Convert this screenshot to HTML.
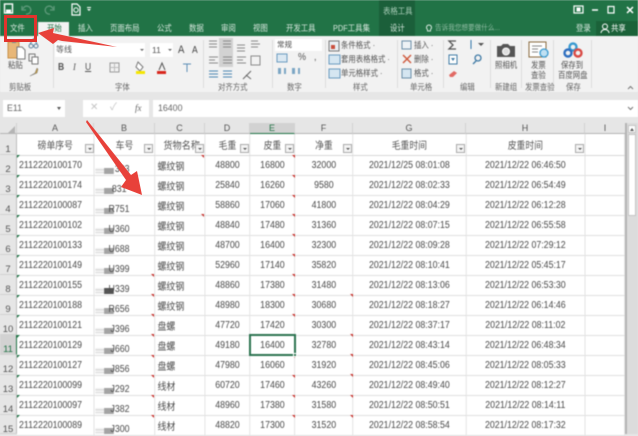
<!DOCTYPE html>
<html><head><meta charset="utf-8"><style>
*{box-sizing:border-box}
html,body{margin:0;padding:0}
body{width:638px;height:434px;overflow:hidden;position:relative;background:#e6e6e6;font-family:"Liberation Sans","Noto Sans CJK SC",sans-serif;color:#444}
.a{position:absolute;white-space:nowrap}
#top{left:0;top:0;width:638px;height:36px;background:#217346}
.tab{position:absolute;top:21px;font-size:8.5px;color:#d5e6dc;line-height:14px;white-space:nowrap;transform:scaleX(.87);transform-origin:0 50%}
#rib{left:0;top:36px;width:638px;height:56px;background:#f2f2f2}
.sep{position:absolute;top:40px;width:1px;height:48px;background:#dcdcdc}
.gl{position:absolute;top:82px;font-size:8.5px;color:#666;line-height:11px;white-space:nowrap;transform:scaleX(.87);transform-origin:0 50%}
.rt{position:absolute;font-size:8.5px;color:#555;line-height:12px;white-space:nowrap;transform:scaleX(.87);transform-origin:0 50%}
table{position:absolute;left:17px;top:134px;border-collapse:collapse;table-layout:fixed;width:691px;background:#fff;font-size:10px;color:#4a4a4a;transform:scaleX(.88);transform-origin:0 0}
td{border-right:1px solid #e0e0e0;border-bottom:1px solid #e0e0e0;height:20px;padding:0;overflow:hidden;white-space:nowrap;text-align:center;position:relative}
tr.h td{height:21px;font-size:10px;color:#555;border-bottom:1px solid #d8d8d8}
td.l{text-align:left;padding-left:2.300px}
td.k{text-align:left;padding-left:2.300px;font-size:10.2px}
td.b{text-align:right;padding-right:28.400px}
td.b span{position:relative;top:4px}
.bar{position:absolute;left:1px;top:12px;width:20.500px;height:6px;background:linear-gradient(#f4f4f4 0 20%,#ddd 20% 40%,#f4f4f4 40% 70%,#ddd 70% 85%,#f4f4f4 85%)}
.bar:after{content:"";position:absolute;right:0;top:0;width:10.200px;height:6px;background:#a4a4a4}
.bar.d:after{background:#555}
.hc{position:absolute;top:123px;height:11px;background:#e6e6e6;border-right:1px solid #d2d2d2;border-bottom:1px solid #b5b5b5;font-size:9px;line-height:11px;color:#555;text-align:center}
.rh{position:absolute;left:0;width:17px;height:20px;background:#e6e6e6;border-right:1px solid #bdbdbd;border-bottom:1px solid #d2d2d2;font-size:9.5px;line-height:29px;color:#555;text-align:center;overflow:hidden}
.f{position:absolute;top:144px;width:9px;height:9px;background:#f4f4f4;border:1px solid #aaa}
.f:after{content:"";position:absolute;left:1.500px;top:2.500px;border:2px solid transparent;border-top:2.500px solid #555}
.r{position:absolute;width:0;height:0;border-top:3px solid #c8342f;border-left:3px solid transparent}
.g{position:absolute;width:0;height:0;border-top:3px solid #217346;border-right:3px solid transparent}
#sheet{position:absolute;left:0;top:0;width:638px;height:434px;filter:blur(.5px)}
</style></head><body>
<div id="sheet">
<div class="a" id="top"></div>
<svg class="a" style="left:0;top:0" width="120" height="20"><rect x="4.500" y="4" width="8" height="9" fill="none" stroke="#fff" stroke-width="1.4"/><rect x="6" y="9.500" width="5" height="3" fill="#fff"/><path d="M23 9a4 4 0 1 1 3 5M22 6v4h4" fill="none" stroke="#5f9a7b" stroke-width="1.3"/><path d="M53 9a4 4 0 1 0-3 5M54 6v4h-4" fill="none" stroke="#5f9a7b" stroke-width="1.3"/><path d="M72 4h5l3 3v8h-8z" fill="none" stroke="#fff" stroke-width="1.2"/><circle cx="76" cy="10" r="2.2" fill="none" stroke="#fff"/><path d="M87 9h4l-2 2z" fill="#fff"/><rect x="87" y="7" width="4" height="1" fill="#fff"/></svg>
<div class="tab" style="left:10px">文件</div>
<div class="a" style="left:38px;top:22px;width:31px;height:14px;background:#f2f2f2"></div>
<div class="tab" style="left:47px;color:#217346">开始</div>
<div class="tab" style="left:78px">插入</div>
<div class="tab" style="left:110px">页面布局</div>
<div class="tab" style="left:157px">公式</div>
<div class="tab" style="left:189px">数据</div>
<div class="tab" style="left:221px">审阅</div>
<div class="tab" style="left:253px">视图</div>
<div class="tab" style="left:286px">开发工具</div>
<div class="tab" style="left:333px">PDF工具集</div>
<div class="a" style="left:379px;top:0;width:36px;height:36px;background:#1b5f3a"></div>
<div class="tab" style="left:383px;top:4px;color:#a9cdb8">表格工具</div>
<div class="tab" style="left:390px">设计</div>
<div class="tab" style="left:435px;font-size:7.600px;color:#8fbba2">告诉我您想要做什么...</div>
<svg class="a" style="left:425px;top:24px" width="8" height="10"><path d="M4 1a2.500 2.500 0 0 1 1.500 4.500V7h-3V5.500A2.500 2.500 0 0 1 4 1z" fill="none" stroke="#cfe3d8"/></svg>
<div class="tab" style="left:576px">登录</div>
<div class="a" style="left:596px;top:21px;width:42px;height:15px;background:#1b6239"></div>
<div class="tab" style="left:611px;color:#fff">共享</div>
<svg class="a" style="left:600px;top:23px" width="10" height="11"><circle cx="5" cy="3.500" r="2.500" fill="none" stroke="#fff"/><path d="M1 10a4 3.500 0 0 1 8 0" fill="none" stroke="#fff"/></svg>
<svg class="a" style="left:570px;top:3px" width="68" height="14" fill="none" stroke="#fff"><rect x="4" y="3" width="9" height="7" stroke-width="1.2"/><rect x="7" y="5" width="3" height="3" fill="#fff"/><path d="M22 7h6" stroke-width="1.5"/><rect x="38" y="3.500" width="6" height="6.500" stroke-width="1.2"/><path d="M57 4l6 6m0-6l-6 6" stroke-width="1.5"/></svg>

<div class="a" id="rib"></div>
<div class="sep" style="left:53px"></div><div class="sep" style="left:203px"></div><div class="sep" style="left:272px"></div><div class="sep" style="left:325px"></div><div class="sep" style="left:397px"></div><div class="sep" style="left:443px"></div><div class="sep" style="left:490px"></div><div class="sep" style="left:521px"></div><div class="sep" style="left:553px"></div><div class="sep" style="left:591px"></div>
<svg class="a" style="left:0;top:36px" width="54" height="46"><rect x="8" y="6" width="11" height="16" fill="#e8b778" stroke="#c98f45"/><rect x="12" y="4" width="4" height="3" fill="#888"/><path d="M17 11h5l3 3v9h-8z" fill="#fff" stroke="#777"/><circle cx="31" cy="10" r="2" fill="none" stroke="#5b7f9c"/><circle cx="36" cy="10" r="2" fill="none" stroke="#5b7f9c"/><path d="M30 8l4-6M37 8l-3-6" stroke="#5b7f9c"/><rect x="29" y="18" width="6" height="7" fill="none" stroke="#777"/><rect x="32" y="21" width="6" height="7" fill="#fff" stroke="#777"/><path d="M30 40l5-3 2-5 1 1-1 4z" fill="#c49a3c" stroke="#777" stroke-width=".5"/></svg>
<div class="rt" style="left:8px;top:59px">粘贴</div>
<div class="gl" style="left:9px">剪贴板</div>
<div class="a" style="left:55px;top:43px;width:90px;height:14px;background:#fff;font-size:8px;line-height:14px;padding-left:1px;color:#555">等线</div>
<div class="a" style="left:150px;top:43px;width:23px;height:14px;background:#fff;font-size:8.5px;line-height:14px;padding-left:2px;color:#555">11</div>
<div class="a" style="left:140px;top:49px;border:2px solid transparent;border-top:2px solid #666"></div>
<div class="a" style="left:168px;top:49px;border:2px solid transparent;border-top:2px solid #666"></div>
<div class="rt" style="left:178px;top:44px;font-size:11px;color:#444">A</div><div class="rt" style="left:192px;top:45px;font-size:9.800px;color:#444">A</div>
<div class="rt" style="left:58px;top:62px;font-weight:bold;font-size:9.800px">B</div>
<div class="rt" style="left:73px;top:62px;font-style:italic;font-size:9.800px;font-family:'Liberation Serif',serif">I</div>
<div class="rt" style="left:85px;top:62px;text-decoration:underline;font-size:9.800px">U</div>
<svg class="a" style="left:105px;top:60px" width="100" height="16"><rect x="5" y="3" width="9" height="9" fill="none" stroke="#999"/><path d="M9.500 3v9M5 7.500h9" stroke="#bbb"/><path d="M33 2l5 5-3 4-4-4z" fill="#fff" stroke="#777"/><rect x="31" y="11" width="9" height="3" fill="#f5e600"/><path d="M54 10l3-7 3 7" fill="none" stroke="#555"/><rect x="52" y="11" width="9" height="3" fill="#d8261c"/><path d="M78 4h8M82 4v8" stroke="#5b8db5"/></svg>
<div class="gl" style="left:115px">字体</div>
<div class="a" style="left:219px;top:38px;width:14px;height:29px;background:#d2d2d2"></div>
<svg class="a" style="left:205px;top:38px" width="66" height="42" stroke="#8a8a8a"><path d="M4 3h8M4 6h8M4 9h8M18 3h8M18 6h8M18 9h8M32 7h8M32 10h8M32 13h8M46 3h7M46 6h9M46 9h7"/><path d="M4 19h9M4 22h6M4 25h9M18 19h9M18 22h9M18 25h9M32 19h9M32 22h6M32 25h9M46 18h9v9h-9z" fill="none"/><path d="M4 33h9M4 36h9M4 39h9M18 33h9M18 36h9M18 39h9" stroke="#4d87b3"/><path d="M38 41l8-8M41 37l5 4" stroke="#666"/></svg>
<div class="gl" style="left:218px">对齐方式</div>
<div class="a" style="left:275px;top:39px;width:47px;height:12px;background:#fff;font-size:7.500px;line-height:12px;padding-left:2px">常规</div>
<div class="rt" style="left:298px;top:52px;font-size:10.400px">%</div><div class="rt" style="left:314px;top:52px;font-size:10.400px">,</div>
<svg class="a" style="left:276px;top:53px" width="30" height="26"><rect x="1" y="1" width="10" height="8" fill="#dbe8f2" stroke="#6a9bc0"/><path d="M2 15h3v6H2zM8 15h2v6H8zM16 15h3v6h-3zM22 15h2v6h-2z" fill="#7ca6c4"/></svg>
<div class="gl" style="left:287px">数字</div>
<svg class="a" style="left:328px;top:39px" width="14" height="42"><rect x="1" y="2" width="10" height="10" fill="#eaeff3" stroke="#777"/><rect x="3" y="6" width="4" height="4" fill="#c94f3d"/><rect x="1" y="16" width="11" height="9" fill="#d5e6f1" stroke="#6a9bc0"/><rect x="1" y="30" width="11" height="9" fill="#d5e6f1" stroke="#6a9bc0"/></svg>
<div class="rt" style="left:341px;top:39px">条件格式 ·</div>
<div class="rt" style="left:341px;top:53px">套用表格格式 ·</div>
<div class="rt" style="left:341px;top:67px">单元格样式 ·</div>
<div class="gl" style="left:353px">样式</div>
<svg class="a" style="left:401px;top:39px" width="12" height="42"><rect x="1" y="2" width="9" height="8" fill="#eef2f5" stroke="#6a8ea8"/><path d="M2 16l8 8M10 16l-8 8" stroke="#d05b3f" stroke-width="1.500"/><rect x="1" y="30" width="9" height="9" fill="#d5e6f1" stroke="#6a8ea8"/></svg>
<div class="rt" style="left:414px;top:39px">插入 ·</div>
<div class="rt" style="left:414px;top:53px">删除 ·</div>
<div class="rt" style="left:414px;top:67px">格式 ·</div>
<div class="gl" style="left:410px">单元格</div>
<svg class="a" style="left:447px;top:38px" width="44" height="42"><path d="M9 3H2l4 4-4 4h7" fill="none" stroke="#555" stroke-width="1.300"/><rect x="2" y="17" width="8" height="9" fill="#fff" stroke="#3f7aa5"/><path d="M4 20h4l-2 3z" fill="#3f7aa5"/><path d="M2 37l5-4 3 2-4 4H3z" fill="#e16a64"/><path d="M24 2v9" stroke="#2f75a8"/><path d="M31 5h6l-3 3z" fill="#555"/><circle cx="31" cy="20" r="3" fill="none" stroke="#3f7aa5" stroke-width="1.300"/><path d="M29 23l-3 3" stroke="#3f7aa5" stroke-width="1.300"/></svg>
<div class="gl" style="left:460px">编辑</div>
<svg class="a" style="left:496px;top:43px" width="20" height="15"><path d="M1 3h4l2-2h5l2 2h5v11H1z" fill="#555"/><circle cx="10" cy="8.500" r="3.500" fill="#ddd" stroke="#fff"/></svg>
<div class="rt" style="left:495px;top:59px">照相机</div>
<div class="gl" style="left:495px">新建组</div>
<svg class="a" style="left:527px;top:41px" width="26" height="20"><rect x="2" y="1" width="17" height="15" fill="#fff" stroke="#8a6a3d"/><path d="M5 5h10M5 8h6M5 11h6" stroke="#888"/><circle cx="17" cy="12" r="4" fill="#bfe0f2" stroke="#3a9ad0" stroke-width="1.300"/></svg>
<div class="rt" style="left:531px;top:59px">发票</div><div class="rt" style="left:531px;top:69px">查验</div>
<div class="gl" style="left:525px">发票查验</div>
<svg class="a" style="left:562px;top:42px" width="22" height="16" fill="none" stroke-width="2.400"><circle cx="11" cy="5" r="3.500" stroke="#3a9ad0"/><circle cx="6" cy="11" r="3.500" stroke="#2f6fc0"/><circle cx="16" cy="11" r="3.500" stroke="#d94a45"/></svg>
<div class="rt" style="left:561px;top:59px">保存到</div><div class="rt" style="left:558px;top:69px">百度网盘</div>
<div class="gl" style="left:566px">保存</div>
<svg class="a" style="left:627px;top:85px" width="7" height="5"><path d="M1 4l2.500-2.500L6 4" fill="none" stroke="#777"/></svg>

<div class="a" style="left:3px;top:100px;width:62px;height:17px;background:#fff;font-size:8.800px;line-height:17px;padding-left:4px;color:#666">E11</div>
<div class="a" style="left:57px;top:107px;border:2px solid transparent;border-top:3px solid #555"></div>
<div class="a" style="left:83px;top:100px;width:66px;height:17px;background:#fff"></div>
<div class="a" style="left:90px;top:101px;font-size:10px;line-height:14px;color:#c4c4c4">✕</div>
<div class="a" style="left:110px;top:101px;font-size:10px;line-height:14px;color:#c4c4c4">✓</div>
<div class="a" style="left:135px;top:101px;font-size:9px;line-height:14px;font-style:italic;color:#666;font-family:'Liberation Serif',serif">fx</div>
<div class="a" style="left:153px;top:100px;width:485px;height:17px;background:#fff;font-size:8.800px;line-height:17px;padding-left:5px;color:#666">16400</div>
<svg class="a" style="left:627px;top:106px" width="7" height="5"><path d="M1 1l2.500 2.500L6 1" fill="none" stroke="#777"/></svg>

<table>
<colgroup><col style="width:87.500px"><col style="width:69.300px"><col style="width:56.800px"><col style="width:51.100px"><col style="width:51.100px"><col style="width:65.900px"><col style="width:128.400px"><col style="width:135.200px"><col style="width:45.700px"></colgroup>
<tr class="h"><td>磅单序号</td><td>车号</td><td style="text-align:left;padding-left:9px;font-size:10.400px">货物名称</td><td>毛重</td><td>皮重</td><td>净重</td><td>毛重时间</td><td>皮重时间</td><td></td></tr>
<tr><td class="l">2112220100170</td><td class="b"><i class="bar"></i><span>303</span></td><td class="k">螺纹钢</td><td>48800</td><td>16800</td><td>32000</td><td>2021/12/25 08:01:08</td><td>2021/12/22 06:46:50</td><td></td></tr>
<tr><td class="l">2112220100174</td><td class="b" style="padding-right:31.800px"><i class="bar"></i><span>831</span></td><td class="k">螺纹钢</td><td>25840</td><td>16260</td><td>9580</td><td>2021/12/22 08:02:33</td><td>2021/12/22 06:54:49</td><td></td></tr>
<tr><td class="l">2112220100087</td><td class="b"><i class="bar"></i><span>R751</span></td><td class="k">螺纹钢</td><td>58860</td><td>17060</td><td>41800</td><td>2021/12/22 08:04:29</td><td>2021/12/22 06:12:28</td><td></td></tr>
<tr><td class="l">2112220100102</td><td class="b"><i class="bar"></i><span>U360</span></td><td class="k">螺纹钢</td><td>48840</td><td>17480</td><td>31360</td><td>2021/12/22 08:07:15</td><td>2021/12/22 06:55:58</td><td></td></tr>
<tr><td class="l">2112220100133</td><td class="b"><i class="bar"></i><span>U688</span></td><td class="k">螺纹钢</td><td>48700</td><td>16400</td><td>32300</td><td>2021/12/22 08:09:28</td><td>2021/12/22 07:29:12</td><td></td></tr>
<tr><td class="l">2112220100149</td><td class="b"><i class="bar"></i><span>U399</span></td><td class="k">螺纹钢</td><td>52960</td><td>17140</td><td>35820</td><td>2021/12/22 08:10:41</td><td>2021/12/22 05:45:17</td><td></td></tr>
<tr><td class="l">2112220100155</td><td class="b"><i class="bar d"></i><span>U339</span></td><td class="k">螺纹钢</td><td>48860</td><td>17380</td><td>31480</td><td>2021/12/22 08:13:06</td><td>2021/12/22 06:53:30</td><td></td></tr>
<tr><td class="l">2112220100188</td><td class="b"><i class="bar"></i><span>R656</span></td><td class="k">螺纹钢</td><td>48980</td><td>18300</td><td>30680</td><td>2021/12/22 08:18:27</td><td>2021/12/22 06:14:46</td><td></td></tr>
<tr><td class="l">2112220100121</td><td class="b"><i class="bar"></i><span>J396</span></td><td class="k">盘螺</td><td>47720</td><td>17420</td><td>30300</td><td>2021/12/22 08:37:17</td><td>2021/12/22 08:11:02</td><td></td></tr>
<tr><td class="l">2112220100129</td><td class="b"><i class="bar"></i><span>J660</span></td><td class="k">盘螺</td><td>49180</td><td>16400</td><td>32780</td><td>2021/12/22 08:43:14</td><td>2021/12/22 06:48:34</td><td></td></tr>
<tr><td class="l">2112220100127</td><td class="b"><i class="bar"></i><span>J856</span></td><td class="k">盘螺</td><td>47980</td><td>16060</td><td>31920</td><td>2021/12/22 08:45:06</td><td>2021/12/22 08:05:33</td><td></td></tr>
<tr><td class="l">2112220100099</td><td class="b"><i class="bar"></i><span>J292</span></td><td class="k">线材</td><td>60720</td><td>17460</td><td>43260</td><td>2021/12/22 08:49:40</td><td>2021/12/22 08:12:27</td><td></td></tr>
<tr><td class="l">2112220100097</td><td class="b"><i class="bar"></i><span>J382</span></td><td class="k">线材</td><td>48960</td><td>17380</td><td>31580</td><td>2021/12/22 08:50:51</td><td>2021/12/22 08:14:11</td><td></td></tr>
<tr><td class="l">2112220100089</td><td class="b"><i class="bar"></i><span>J300</span></td><td class="k">线材</td><td>48820</td><td>17300</td><td>31520</td><td>2021/12/22 08:58:54</td><td>2021/12/22 08:17:32</td><td></td></tr>
</table>

<div class="hc" style="left:0;width:17px"></div>
<div class="a" style="left:8px;top:126px;width:0;height:0;border-bottom:7px solid #b5b5b5;border-left:7px solid transparent"></div>
<div class="hc" style="left:17px;width:77px">A</div>
<div class="hc" style="left:94px;width:61px">B</div>
<div class="hc" style="left:155px;width:50px">C</div>
<div class="hc" style="left:205px;width:45px">D</div>
<div class="hc" style="left:250px;width:45px;background:#d2d2d2;border-bottom:1px solid #217346;color:#217346">E</div>
<div class="hc" style="left:295px;width:58px">F</div>
<div class="hc" style="left:353px;width:113px">G</div>
<div class="hc" style="left:466px;width:119px">H</div>
<div class="hc" style="left:585px;width:41px">I</div>

<div class="rh" style="top:134px;height:21px;line-height:32px">1</div>
<div class="rh" style="top:155px">2</div><div class="rh" style="top:175px">3</div><div class="rh" style="top:195px">4</div><div class="rh" style="top:215px">5</div><div class="rh" style="top:235px">6</div><div class="rh" style="top:255px">7</div><div class="rh" style="top:275px">8</div><div class="rh" style="top:295px">9</div><div class="rh" style="top:315px">10</div>
<div class="rh" style="top:335px;background:#d2d2d2;border-right:1px solid #217346;color:#217346">11</div>
<div class="rh" style="top:355px">12</div><div class="rh" style="top:375px">13</div><div class="rh" style="top:395px">14</div><div class="rh" style="top:415px;height:19px">15</div>

<div class="f" style="left:85px"></div><div class="f" style="left:144px"></div><div class="f" style="left:195px"></div><div class="f" style="left:240px"></div><div class="f" style="left:285px"></div><div class="f" style="left:343px"></div><div class="f" style="left:456px"></div><div class="f" style="left:575px"></div>

<div class="g" style="left:17px;top:155px"></div><div class="g" style="left:17px;top:175px"></div><div class="g" style="left:17px;top:195px"></div><div class="g" style="left:17px;top:215px"></div><div class="g" style="left:17px;top:235px"></div><div class="g" style="left:17px;top:255px"></div><div class="g" style="left:17px;top:275px"></div><div class="g" style="left:17px;top:295px"></div><div class="g" style="left:17px;top:315px"></div><div class="g" style="left:17px;top:335px"></div><div class="g" style="left:17px;top:355px"></div><div class="g" style="left:17px;top:375px"></div><div class="g" style="left:17px;top:395px"></div><div class="g" style="left:17px;top:415px"></div>

<div class="r" style="left:201px;top:155px"></div><div class="r" style="left:201px;top:214px"></div><div class="r" style="left:151px;top:274px"></div><div class="r" style="left:151px;top:294px"></div><div class="r" style="left:151px;top:314px"></div><div class="r" style="left:151px;top:334px"></div><div class="r" style="left:151px;top:355px"></div><div class="r" style="left:151px;top:375px"></div><div class="r" style="left:151px;top:395px"></div><div class="r" style="left:151px;top:415px"></div>
<div class="r" style="left:292px;top:155px"></div><div class="r" style="left:292px;top:175px"></div><div class="r" style="left:292px;top:195px"></div><div class="r" style="left:292px;top:214px"></div><div class="r" style="left:292px;top:234px"></div><div class="r" style="left:292px;top:254px"></div><div class="r" style="left:292px;top:274px"></div><div class="r" style="left:292px;top:294px"></div><div class="r" style="left:292px;top:314px"></div><div class="r" style="left:292px;top:355px"></div><div class="r" style="left:292px;top:375px"></div><div class="r" style="left:292px;top:395px"></div><div class="r" style="left:292px;top:415px"></div>
<div class="r" style="left:350px;top:294px"></div><div class="r" style="left:350px;top:334px"></div><div class="r" style="left:350px;top:354px"></div><div class="r" style="left:350px;top:374px"></div><div class="r" style="left:350px;top:395px"></div><div class="r" style="left:350px;top:415px"></div>

<div class="a" style="left:249px;top:334px;width:47px;height:22px;border:2px solid #2b7350"></div>
<div class="a" style="left:293px;top:353px;width:4px;height:4px;background:#2b7350;border:1px solid #fff"></div>

<div class="a" style="left:625px;top:123px;width:13px;height:311px;background:#dcdcdc;border-left:2px solid #b4b4b4"></div>
<div class="a" style="left:628px;top:134px;width:8px;height:82px;background:#fff;border:1px solid #c4c4c4"></div>
<div class="a" style="left:628px;top:125px;width:8px;height:8px;background:#fff;border:1px solid #c4c4c4"></div>
<div class="a" style="left:630px;top:126px;border:2px solid transparent;border-bottom:3px solid #555"></div>
</div>

<svg class="a" style="left:0;top:0;filter:blur(.3px)" width="638" height="434">
<rect x="5.500" y="16.500" width="30" height="24" fill="none" stroke="#e2332d" stroke-width="3"/>
<path d="M38 33L54 28 53 33 117 47 62 41 58 40 53 44z" fill="#e8413a"/>
<path d="M87 120L131 175 137 171 142 195 121 187 126 180 86 122z" fill="#e8413a"/>
</svg>
</body></html>
